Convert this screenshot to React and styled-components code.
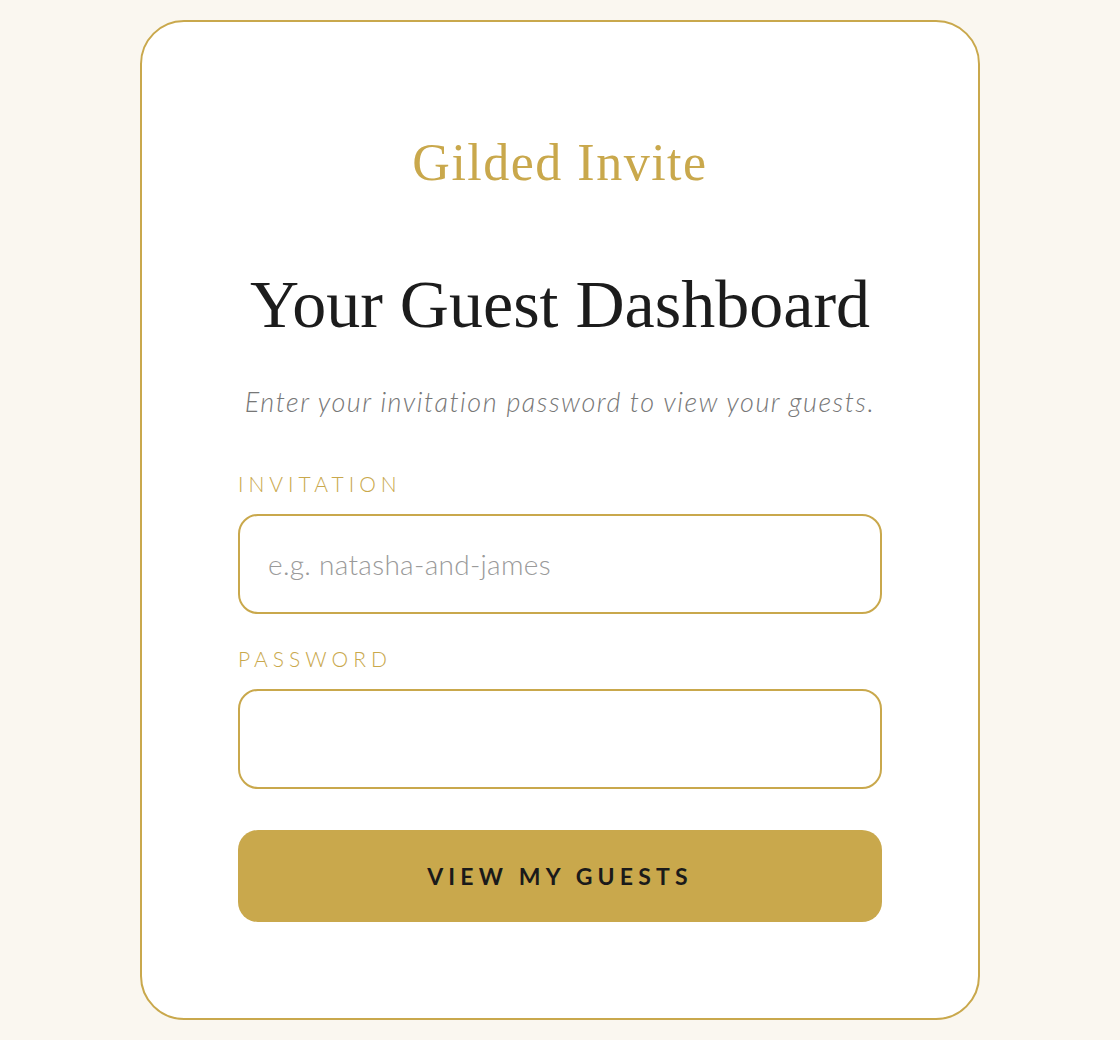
import React from "react";
import styled, { createGlobalStyle } from "styled-components";

const GlobalStyle = createGlobalStyle`
    html, body {
        margin: 0;
        padding: 0;
        background: #faf7f0;
    }
    * {
        box-sizing: border-box;
    }
`

const Page = styled.div`
    min-height: 1040px;
    display: flex;
    justify-content: center;
    padding: 20px 0;
`

const Card = styled.div`
    width: 840px;
    background: #ffffff;
    border: 2px solid #c9a84c;
    border-radius: 44px;
    padding: 96px;
    display: flex;
    flex-direction: column;
`

const Brand = styled.div`
    font-family: "Liberation Serif", serif;
    font-size: 52px;
    line-height: 1;
    color: #c9a84c;
    text-align: center;
    margin-top: 19px;
    letter-spacing: 1.5px;
`

const Title = styled.h1`
    font-family: "Liberation Serif", serif;
    font-weight: 400;
    font-size: 68px;
    line-height: 1;
    color: #1c1c1c;
    text-align: center;
    margin: 81px 0 0;
`

const Subtitle = styled.p`
    font-family: Lato, sans-serif;
    font-weight: 300;
    font-style: italic;
    font-size: 27px;
    letter-spacing: 1.5px;
    color: #777;
    text-align: center;
    margin: 47px 0 0;
`

const Form = styled.form`
    display: flex;
    flex-direction: column;
    margin-top: 53px;
`

const Label = styled.label`
    font-family: Lato, sans-serif;
    font-weight: 300;
    font-size: 21px;
    letter-spacing: 5px;
    text-transform: uppercase;
    color: #c9a84c;
    margin-top: ${p => (p.$first ? "0" : "32px")};
    margin-bottom: 18px;
`

const Input = styled.input`
    height: 100px;
    width: 100%;
    border: 2px solid #c9a84c;
    border-radius: 20px;
    padding: 0 28px;
    font-family: Lato, sans-serif;
    font-weight: 300;
    font-size: 28px;
    letter-spacing: 0.3px;
    color: #333;
    background: #fff;
    outline: none;
    &::placeholder {
        color: #9a9a9a;
    }
`

const Button = styled.button`
    margin-top: 41px;
    height: 92px;
    width: 100%;
    border: none;
    border-radius: 20px;
    background: #c9a84c;
    color: #1a1a1a;
    font-family: Lato, sans-serif;
    font-weight: 700;
    font-size: 23px;
    letter-spacing: 5.2px;
    text-transform: uppercase;
    cursor: pointer;
`

const App = () => {
    return (
        <Page>
            <GlobalStyle />
            <Card>
                <Brand>Gilded Invite</Brand>
                <Title>Your Guest Dashboard</Title>
                <Subtitle>Enter your invitation password to view your guests.</Subtitle>
                <Form onSubmit={e => e.preventDefault()}>
                    <Label $first htmlFor="invitation">Invitation</Label>
                    <Input id="invitation" placeholder="e.g. natasha-and-james" />
                    <Label htmlFor="password">Password</Label>
                    <Input id="password" type="password" />
                    <Button type="submit">View my guests</Button>
                </Form>
            </Card>
        </Page>
    )
}

export default App;
